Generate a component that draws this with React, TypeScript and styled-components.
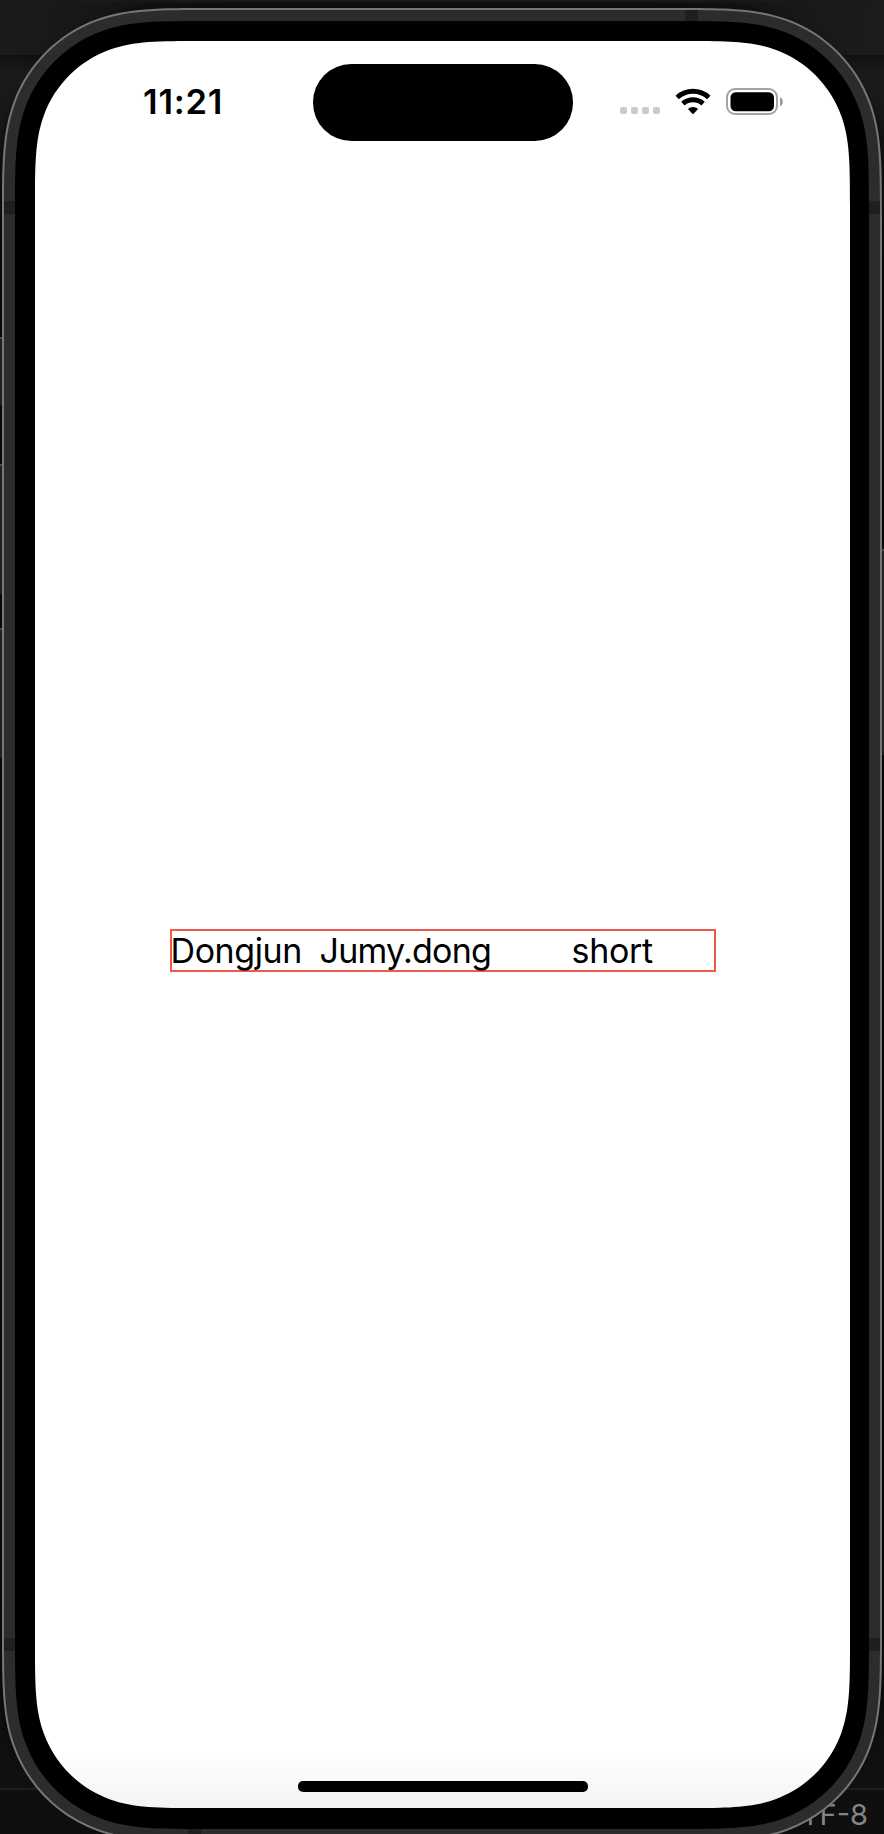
import React from "react";
import styled, { createGlobalStyle } from "styled-components";

const continuousRect = (w: number, h: number, r: number) => {
  const a = 1.4 * r, b = 1.05 * r, c = 0.837 * r;
  const d = 0.63149 * r, e = 0.07491 * r, f = 0.37282 * r, g = 0.16906 * r;
  return [
    `M ${a} 0 L ${w - a} 0`,
    `C ${w - b} 0 ${w - c} 0 ${w - d} ${e}`,
    `C ${w - f} ${g} ${w - g} ${f} ${w - e} ${d}`,
    `C ${w} ${c} ${w} ${b} ${w} ${a}`,
    `L ${w} ${h - a}`,
    `C ${w} ${h - b} ${w} ${h - c} ${w - e} ${h - d}`,
    `C ${w - g} ${h - f} ${w - f} ${h - g} ${w - d} ${h - e}`,
    `C ${w - c} ${h} ${w - b} ${h} ${w - a} ${h}`,
    `L ${a} ${h}`,
    `C ${b} ${h} ${c} ${h} ${d} ${h - e}`,
    `C ${f} ${h - g} ${g} ${h - f} ${e} ${h - d}`,
    `C 0 ${h - c} 0 ${h - b} 0 ${h - a}`,
    `L 0 ${a}`,
    `C 0 ${b} 0 ${c} ${e} ${d}`,
    `C ${g} ${f} ${f} ${g} ${d} ${e}`,
    `C ${c} 0 ${b} 0 ${a} 0 Z`,
  ].join(" ");
};

const Global = createGlobalStyle`
  * { box-sizing: border-box; }
  body { margin: 0; overflow: hidden; background: #111; }
`;

const Desktop = styled.main`
  position: relative;
  width: 884px;
  height: 1834px;
  overflow: hidden;
  display: flex;
  flex-direction: column;
  background: #131313;
  font-family: Inter, "Liberation Sans", sans-serif;
`;

const TitleStrip = styled.div`
  height: 55px;
  border-top: 2px solid #1a1a1a;
  background: linear-gradient(90deg, #1b1b1b, #101010 30%, #101010 70%, #1c1c1c);
`;

const EditorArea = styled.div`
  flex: 1;
  background: linear-gradient(#101010, #1b1b1b 18px, #171717 80px, #0b0b0b 200px, #0b0b0b 1500px, #111);
`;

const StatusStrip = styled.div`
  height: 46px;
  border-top: 2px solid #1d1d1d;
  background: #0f0f0f;
  display: flex;
  justify-content: flex-end;
  padding: 7px 16px 0 0;
  color: #858585;
  font-size: 29px;
  line-height: 35px;
`;

const SideButton = styled.div<{ $side: "left" | "right"; $top: number; $height: number }>`
  position: absolute;
  ${(p) => p.$side}: 0;
  top: ${(p) => p.$top}px;
  width: 3px;
  height: ${(p) => p.$height}px;
  border-top: 2px solid #494949;
  background: #202020;
`;

const DeviceShadow = styled.div`
  position: absolute;
  top: 8px;
  left: 2px;
  width: 880px;
  height: 1834px;
  border-radius: 165px;
  box-shadow: 0 0 10px 1px rgba(0, 0, 0, 0.6);
`;

const Rim = styled.div`
  position: absolute;
  top: 8px;
  left: 2px;
  width: 880px;
  height: 1834px;
  padding: 2px;
  background: #777;
  clip-path: path("${continuousRect(880, 1834, 150)}");
`;

const Chassis = styled.div`
  position: relative;
  width: 876px;
  height: 1830px;
  padding: 11px;
  background: #2c2c2c;
  clip-path: path("${continuousRect(876, 1830, 148)}");
`;

const AntennaBand = styled.i<{ $x: number; $y: number; $vertical?: boolean }>`
  position: absolute;
  left: ${(p) => p.$x}px;
  top: ${(p) => p.$y}px;
  width: ${(p) => (p.$vertical ? 13 : 11)}px;
  height: ${(p) => (p.$vertical ? 11 : 13)}px;
  background: #1f1f1f;
`;

const Bezel = styled.div`
  width: 854px;
  height: 1808px;
  padding: 20px 19px 21px 20px;
  background: #000;
  clip-path: path("${continuousRect(854, 1808, 137)}");
`;

const Screen = styled.div`
  width: 815px;
  height: 1767px;
  display: flex;
  flex-direction: column;
  align-items: center;
  background: linear-gradient(#fff, #fff 1712px, #f3f3f3);
  clip-path: path("${continuousRect(815, 1767, 118)}");
`;

const StatusBar = styled.header`
  width: 100%;
  height: 122px;
  display: grid;
  grid-template-columns: 277.5px 260px 277.5px;
  align-items: start;
`;

const Clock = styled.time`
  padding: 43px 0 0 108px;
  font-size: 34.5px;
  line-height: 36px;
  font-weight: 600;
  letter-spacing: 0.8px;
  color: #000;
`;

const Island = styled.div`
  height: 76.5px;
  margin-top: 23px;
  border-radius: 38.25px;
  background: #000;
`;

const Indicators = styled.div`
  display: flex;
  align-items: flex-start;
  padding: 47px 0 0 47.5px;
`;

const Signal = styled.div`
  display: flex;
  gap: 4px;
  margin: 19px 15px 0 0;
`;

const Dot = styled.i`
  width: 7px;
  height: 7px;
  border-radius: 2px;
  background: #cbcbcb;
`;

const Battery = styled.svg`
  margin-left: 14.5px;
`;

const Content = styled.section`
  flex: 1;
  width: 100%;
  display: flex;
  justify-content: center;
  padding-top: 766px;
`;

const NameRow = styled.div`
  width: 546px;
  height: 42.5px;
  border: 2px solid #ef5a4c;
  display: flex;
  font-size: 34px;
  line-height: 40px;
  color: #000;
  white-space: nowrap;
`;

const Cell = styled.span<{ $width: number; $spacing: number }>`
  width: ${(p) => p.$width}px;
  flex: none;
  letter-spacing: ${(p) => p.$spacing}px;
  text-indent: -1px;
`;

const HomeIndicator = styled.div`
  width: 290px;
  height: 10.5px;
  border-radius: 5px;
  margin-bottom: 16.5px;
  background: #000;
`;

const WifiIcon = () => (
  <svg width="36" height="27" viewBox="0 0 36 27">
    <g fill="none" stroke="#000" strokeWidth="5">
      <path d="M2.2 9.5A23.3 23.3 0 0 1 33.8 9.5" />
      <path d="M7.9 15.7A14.9 14.9 0 0 1 28.1 15.7" />
    </g>
    <path d="M12.9 21.1C15.5 18.4 20.5 18.4 23.1 21.1L18.6 25.7Q18 26.3 17.4 25.7Z" />
  </svg>
);

const BatteryIcon = () => (
  <Battery width="58" height="27" viewBox="0 0 58 27">
    <rect x="1" y="1" width="50" height="25" rx="8" fill="none" stroke="#a3a3a3" strokeWidth="2" />
    <rect x="4.5" y="4.2" width="43.5" height="19" rx="5.2" />
    <path d="M54 9.2C57.8 10.8 57.8 16.6 54 18.2Z" fill="#999" />
  </Battery>
);

export default function App() {
  return (
    <Desktop>
      <Global />
      <TitleStrip />
      <EditorArea />
      <StatusStrip>UTF-8</StatusStrip>
      <DeviceShadow />
      <SideButton $side="left" $top={337} $height={68} />
      <SideButton $side="left" $top={464} $height={130} />
      <SideButton $side="left" $top={628} $height={130} />
      <SideButton $side="right" $top={549} $height={206} />
      <Rim>
        <Chassis>
          <AntennaBand $x={681} $y={0} $vertical />
          <AntennaBand $x={184} $y={1819} $vertical />
          <AntennaBand $x={0} $y={191} />
          <AntennaBand $x={865} $y={191} />
          <AntennaBand $x={0} $y={1628} />
          <AntennaBand $x={865} $y={1628} />
          <Bezel>
            <Screen>
              <StatusBar>
                <Clock>11:21</Clock>
                <Island />
                <Indicators>
                  <Signal>
                    <Dot />
                    <Dot />
                    <Dot />
                    <Dot />
                  </Signal>
                  <WifiIcon />
                  <BatteryIcon />
                </Indicators>
              </StatusBar>
              <Content>
                <NameRow>
                  <Cell $width={149} $spacing={-0.4}>Dongjun</Cell>
                  <Cell $width={252} $spacing={-0.75}>Jumy.dong</Cell>
                  <Cell $width={120} $spacing={-0.3}>short</Cell>
                </NameRow>
              </Content>
              <HomeIndicator />
            </Screen>
          </Bezel>
        </Chassis>
      </Rim>
    </Desktop>
  );
}
